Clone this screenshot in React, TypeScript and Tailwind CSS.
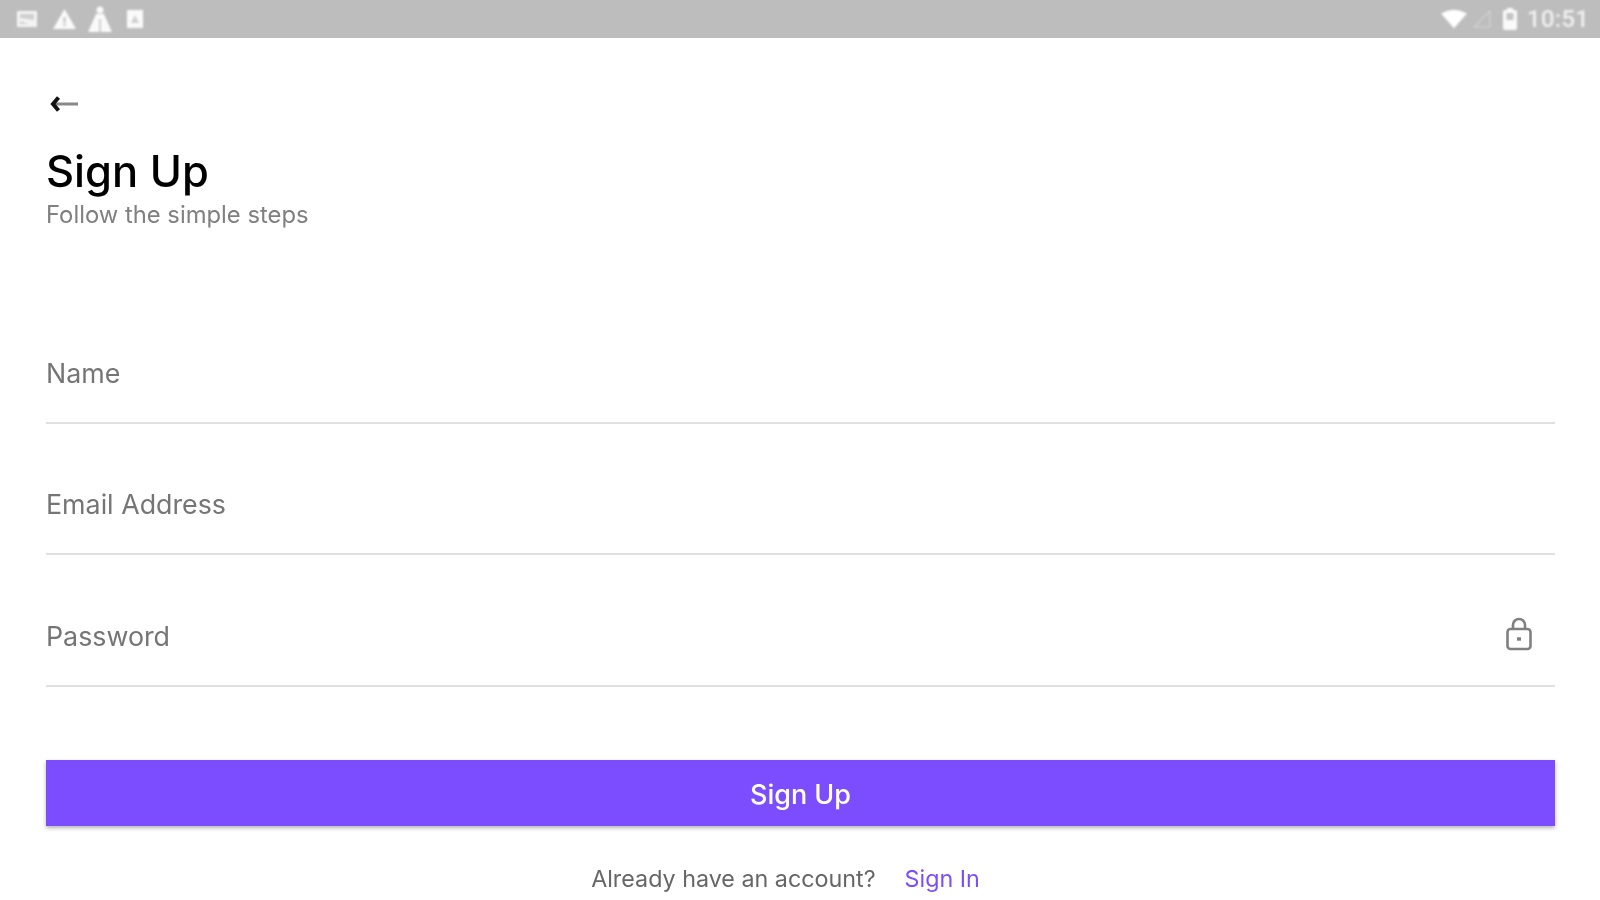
export default function App() {
  const Field = ({ label, icon }: { label: string; icon?: boolean }) => (
    <div className="flex h-[131.5px] items-end">
      <div className="flex h-[62px] w-full items-start justify-between border-b-2 border-[#e0e0e0]">
        <span className="-mt-[4px] text-[26.8px] leading-[30px] text-[#757575] blur-[0.7px]">{label}</span>
        {icon && (
          <svg width="30" height="34" viewBox="0 0 30 34" fill="none" stroke="#808080" strokeWidth="2.6" className="-mt-[8px] mr-[21px] blur-[0.7px]">
            <rect x="3.5" y="12" width="23" height="20" rx="3" />
            <path d="M9 12V8a6 6 0 0 1 12 0v4" />
            <path d="M13 22h4" strokeWidth="3.4" />
          </svg>
        )}
      </div>
    </div>
  );
  return (
    <div className="flex h-[900px] w-[1600px] flex-col overflow-hidden bg-white [font-family:Inter,sans-serif]">
      <div className="flex h-[38px] shrink-0 items-center justify-between bg-[#bdbdbd] pl-[17px] pr-[11px]">
        <div className="flex items-center gap-[14px] blur-[0.9px]">
          <svg width="20" height="18" viewBox="0 0 20 18" fill="#f4f4f4">
            <path d="M0 1h20v16H0z" />
            <path d="M3 4h14v6L3 8z" fill="#cfcfcf" />
            <path d="M3 11l9 3H3z" fill="#cfcfcf" />
          </svg>
          <svg width="23" height="20" viewBox="0 0 23 20" fill="#fafafa" className="ml-[2px]">
            <path d="M11.5 0L23 20H0z" />
            <path d="M10.5 8h2v6h-2zM10.5 15h2v2h-2z" fill="#bdbdbd" />
          </svg>
          <svg width="24" height="26" viewBox="0 0 24 26" fill="#fafafa" className="-ml-[2px]">
            <circle cx="12" cy="4" r="3.5" />
            <path d="M8 8h8l3 7 5 11H0l5-11z" />
            <path d="M11.3 13h1.400v13h-1.400z" fill="#bdbdbd" />
          </svg>
          <svg width="16" height="18" viewBox="0 0 16 18" fill="#fafafa" className="ml-[1px]">
            <path d="M0 0h16v18H0z" />
            <path d="M8 5l4 8H4z" fill="#cfcfcf" />
          </svg>
        </div>
        <div className="flex items-center blur-[0.8px]">
          <svg width="26" height="20" viewBox="0 0 28 20" fill="#ffffff" className="mr-[5px]">
            <path d="M0 4Q14-4 28 4L14 20z" />
          </svg>
          <svg width="20" height="20" viewBox="0 0 20 20" fill="none" stroke="#d0d0d0" strokeWidth="1.5" className="mr-[11px]">
            <path d="M18 2v16H2z" />
          </svg>
          <svg width="14" height="22" viewBox="0 0 14 22" fill="#fafafa" className="mr-[10px]">
            <path d="M4 0h6v2h2a2 2 0 0 1 2 2v16a2 2 0 0 1-2 2H2a2 2 0 0 1-2-2V4a2 2 0 0 1 2-2h2z" />
            <path d="M3.5 5h7v7h-7z" fill="#c4c4c4" />
          </svg>
          <span className="text-[24.5px] font-medium leading-none text-[#f0f0f0] [font-family:Roboto,sans-serif]">10:51</span>
        </div>
      </div>

      <div className="flex grow flex-col pl-[46px] pr-[45px]">
        <svg width="30" height="20" viewBox="0 0 30 20" fill="none" className="ml-[3px] mt-[56px] shrink-0 blur-[0.7px]">
          <path d="M6 10h23" stroke="#888" strokeWidth="3" />
          <path d="M9.5 3.500L4 10l5.500 6.500" stroke="#111" strokeWidth="4" />
        </svg>
        <h1 className="mt-[32px] text-[43.5px] font-medium leading-[50px] text-black blur-[0.5px]">Sign Up</h1>
        <p className="mt-[4px] text-[23.8px] leading-[30px] text-[#808080] blur-[0.7px]">Follow the simple steps</p>
        <div className="mt-[62px]">
          <Field label="Name" />
          <Field label="Email Address" />
          <Field label="Password" icon />
        </div>
        <button className="mt-[73px] h-[66px] w-full shrink-0 bg-[#7c4dff] pt-[6px] text-[27px] font-medium text-white shadow-[0_2px_4px_rgba(0,0,0,0.3)]"><span className="inline-block blur-[0.6px]">Sign Up</span></button>
        <div className="mt-[38px] flex justify-center gap-[29px] pr-[30px] text-[23.3px] leading-[30px] blur-[0.7px]">
          <span className="text-[#666]">Already have an account?</span>
          <span className="text-[#7c4dff]">Sign In</span>
        </div>
      </div>
    </div>
  );
}
